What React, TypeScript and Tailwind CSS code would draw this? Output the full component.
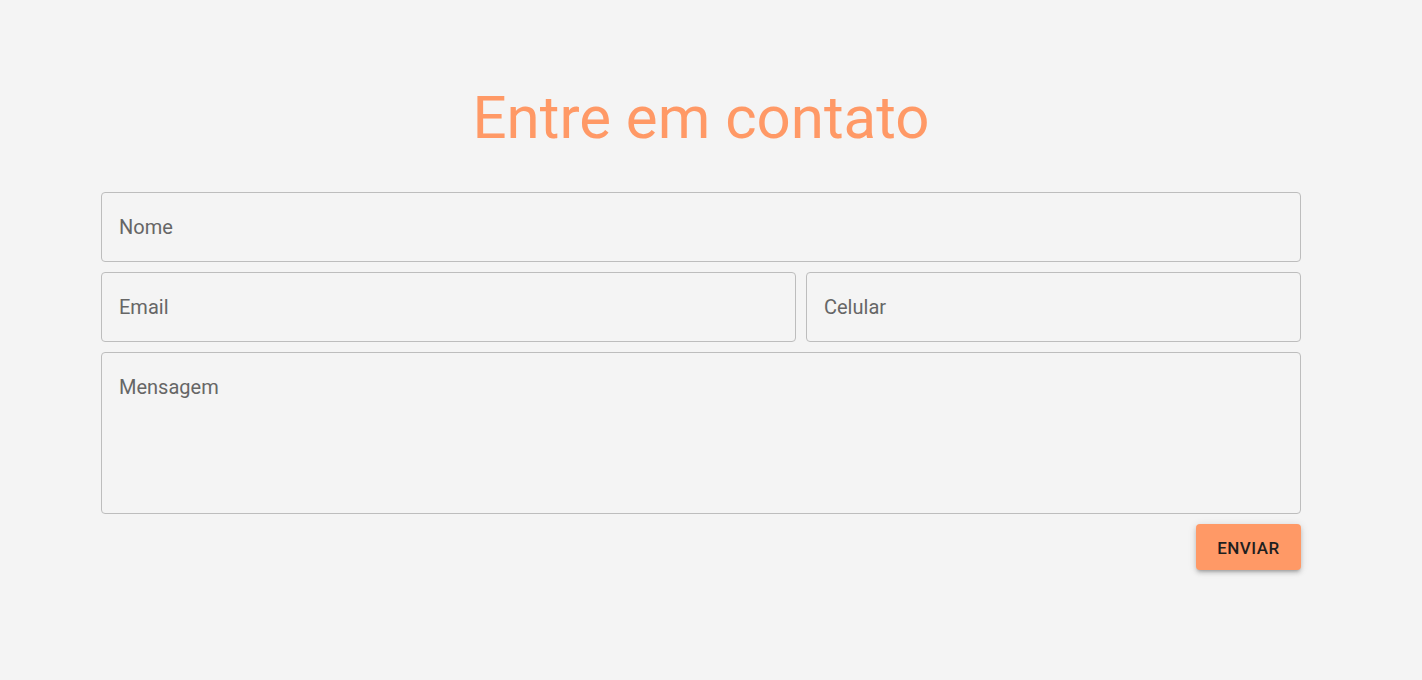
import React from 'react'

const fieldClass =
    'w-full h-[70px] rounded-[4px] border border-[#bdbdbd] bg-transparent px-[17px] text-[20px] text-[#333] placeholder:text-[#666] outline-none'

const App = () => {
    return (
        <div className="min-h-[680px] w-full bg-[#f4f4f4]" style={{ fontFamily: 'Roboto, "Liberation Sans", sans-serif' }}>
            <div className="w-[1402px]">
                <div className="mx-auto w-[1200px] pt-[88px]">
                    <h1 className="text-center text-[60px] leading-none font-normal text-[#ff9966]">Entre em contato</h1>

                    <form className="mt-[44px] flex flex-col gap-[10px]" onSubmit={(e) => e.preventDefault()}>
                        <input className={fieldClass} placeholder="Nome" />
                        <div className="grid grid-cols-[695px_495px] gap-[10px]">
                            <input className={fieldClass} placeholder="Email" />
                            <input className={fieldClass} placeholder="Celular" />
                        </div>
                        <textarea
                            className="w-full h-[162px] resize-none rounded-[4px] border border-[#bdbdbd] bg-transparent px-[17px] pt-[20px] text-[20px] leading-[28px] text-[#333] placeholder:text-[#666] outline-none"
                            placeholder="Mensagem"
                        />
                        <div className="flex justify-end">
                            <button
                                type="submit"
                                className="h-[46px] w-[105px] rounded-[4px] bg-[#ff9966] pt-[3px] text-[17px] font-medium tracking-[0.5px] text-[#1f1f1f] shadow-[0_3px_3px_-2px_rgba(0,0,0,0.2),0_3px_4px_0_rgba(0,0,0,0.14),0_1px_8px_0_rgba(0,0,0,0.12)]"
                            >
                                ENVIAR
                            </button>
                        </div>
                    </form>
                </div>
            </div>
        </div>
    )
}

export default App
